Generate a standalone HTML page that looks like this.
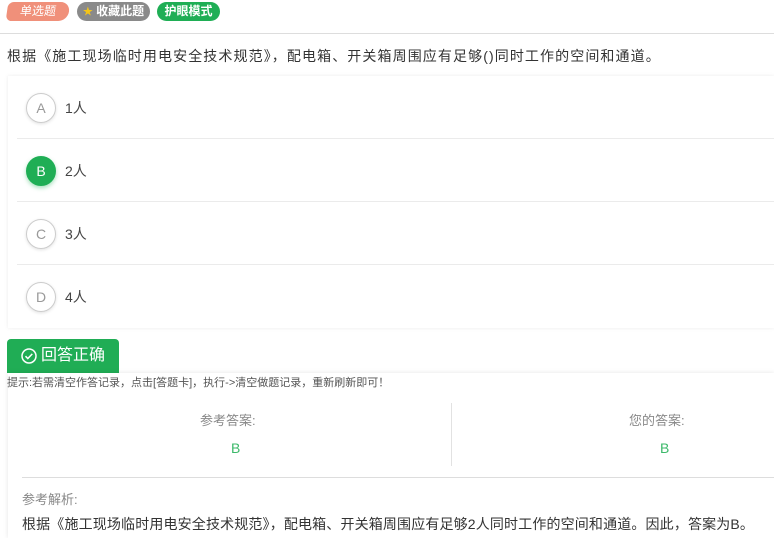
<!DOCTYPE html>
<html><head><meta charset="utf-8"><style>
*{margin:0;padding:0;box-sizing:border-box}
body{width:774px;height:538px;overflow:hidden;background:#fff;font-family:"Liberation Sans","Noto Sans CJK SC",sans-serif;color:#333;position:relative}
.a{position:absolute}
.tag{position:absolute;top:2px;height:19px;border-radius:10px;color:#fff;font-size:12px;font-weight:bold;line-height:19px;text-align:center}
.opt{position:absolute;left:9px;right:0;height:63px;border-bottom:1px solid #ebebeb}
.c{position:absolute;left:9px;top:17px;width:30px;height:30px;border-radius:50%;border:1px solid #ccc;color:#999;font-size:14px;line-height:28px;text-align:center;box-shadow:0 1px 3px rgba(0,0,0,.12)}
.t{position:absolute;left:48px;top:22px;font-size:14px;color:#444}
</style></head><body>
<div class="tag" style="left:7px;width:62px;background:#f0907a;border-radius:6px 10px 10px 6px;font-weight:normal;transform:skewX(-8deg)">单选题</div>
<div class="tag" style="left:77px;width:73px;background:#8a8a8a"><span style="color:#f5c518;font-size:10px">★</span> 收藏此题</div>
<div class="tag" style="left:157px;width:63px;background:#1fae55">护眼模式</div>
<div class="a" style="left:0;right:0;top:33px;border-top:1px solid #ddd"></div>
<div class="a" style="left:7px;top:46px;font-size:14px;color:#333;letter-spacing:1.1px;white-space:nowrap">根据《施工现场临时用电安全技术规范》，配电箱、开关箱周围应有足够()同时工作的空间和通道。</div>
<div class="a" style="left:8px;right:0;top:76px;height:252px;box-shadow:0 0 4px rgba(0,0,0,.08)">
<div class="opt" style="top:0"><div class="c">A</div><div class="t">1人</div></div>
<div class="opt" style="top:63px"><div class="c" style="background:#1fae55;border-color:#1fae55;color:#fff;box-shadow:0 2px 4px rgba(31,174,85,.4)">B</div><div class="t">2人</div></div>
<div class="opt" style="top:126px"><div class="c">C</div><div class="t">3人</div></div>
<div class="opt" style="top:189px;border:none"><div class="c">D</div><div class="t">4人</div></div>
</div>
<div class="a" style="left:7px;top:339px;width:112px;height:34px;background:#20ad55;border-radius:4px 4px 0 0;color:#fff;font-size:16px;line-height:34px;padding-left:14px">
<svg width="16" height="16" viewBox="0 0 16 16" style="position:absolute;left:14px;top:9px"><circle cx="8" cy="8" r="7" fill="none" stroke="#fff" stroke-width="1.5"/><path d="M4.5 8.2l2.3 2.3 4.5-4.6" fill="none" stroke="#fff" stroke-width="1.5"/></svg>
<span style="margin-left:20px">回答正确</span></div>
<div class="a" style="left:8px;right:0;top:373px;height:165px;box-shadow:0 0 5px rgba(0,0,0,.1);background:#fff"></div>
<div class="a" style="left:7px;top:374px;font-size:11px;color:#555">提示:若需清空作答记录，点击[答题卡]，执行->清空做题记录，重新刷新即可！</div>
<div class="a" style="left:451px;top:403px;height:63px;border-left:1px solid #e2e2e2"></div>
<div class="a" style="left:200px;top:410px;font-size:13px;color:#888">参考答案:</div>
<div class="a" style="left:231px;top:440px;font-size:14px;color:#3cb96a">B</div>
<div class="a" style="left:629px;top:410px;font-size:13px;color:#888">您的答案:</div>
<div class="a" style="left:660px;top:440px;font-size:14px;color:#3cb96a">B</div>
<div class="a" style="left:22px;right:0;top:477px;border-top:1px solid #ddd"></div>
<div class="a" style="left:22px;top:489px;font-size:13px;color:#888">参考解析:</div>
<div class="a" style="left:22px;top:514px;font-size:14px;color:#333;letter-spacing:0.15px;white-space:nowrap">根据《施工现场临时用电安全技术规范》，配电箱、开关箱周围应有足够2人同时工作的空间和通道。因此，答案为B。</div>
</body></html>
